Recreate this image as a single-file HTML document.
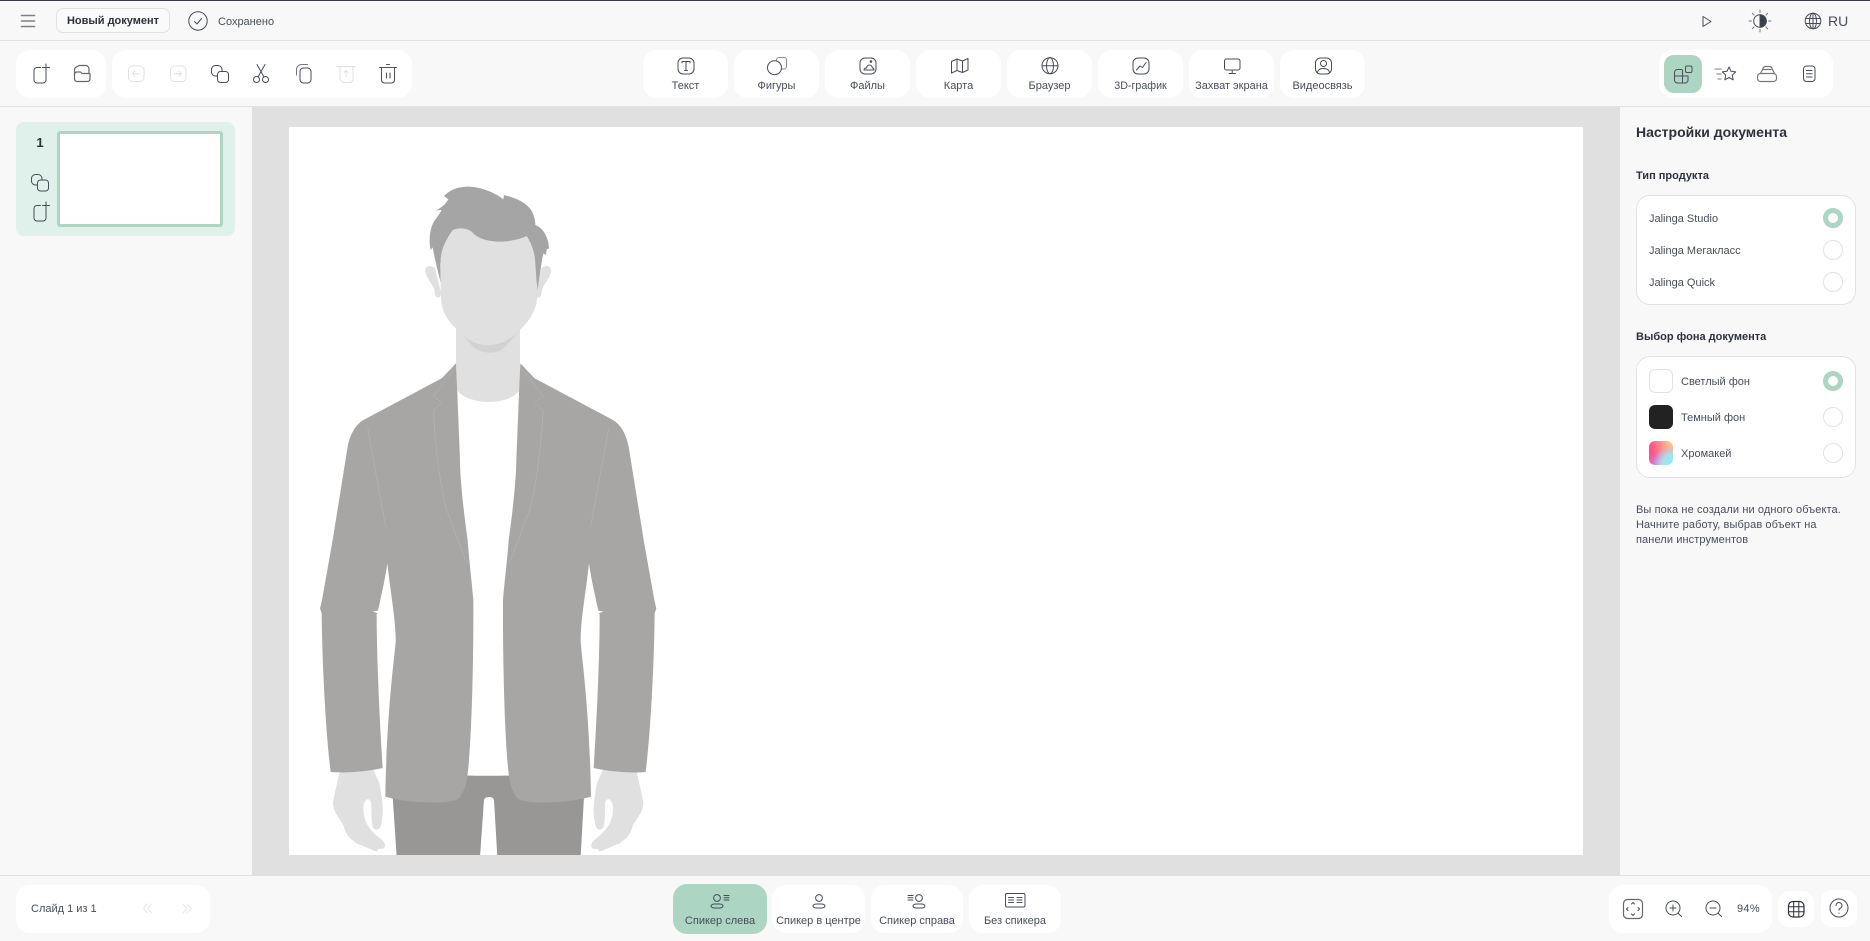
<!DOCTYPE html>
<html lang="ru"><head><meta charset="utf-8"><title>Jalinga</title>
<style>
*{box-sizing:border-box}
html,body{margin:0;padding:0}
body{width:1870px;height:941px;position:relative;overflow:hidden;background:#f8f8f8;font-family:"Liberation Sans",sans-serif;color:#484d5a;font-size:11px}
.a{position:absolute}
.w{position:absolute;background:#fff;border-radius:14px}
.t{position:absolute;white-space:nowrap;line-height:14px;transform:translateY(-50%)}
.c{position:absolute;white-space:nowrap;line-height:14px;text-align:center;transform:translateY(-50%)}
.b{font-weight:bold;color:#2d313c}
.r{position:absolute;width:20px;height:20px;border-radius:50%;border:1px solid #e2e2e2;background:#fff}
.r.on{border:5px solid #acd5c3}
.s{position:absolute;left:1649px;width:24px;height:24px;border-radius:6px}
svg{position:absolute;left:0;top:0}
</style></head><body>
<div class="a" style="left:0;top:0;width:1870px;height:1px;background:#3a3a44"></div>
<div class="a" style="left:0;top:40px;width:1870px;height:1px;background:#e2e2e2"></div>
<div class="a" style="left:0;top:106px;width:1870px;height:1px;background:#e2e2e2"></div>
<div class="a" style="left:252px;top:107px;width:1368px;height:769px;background:#e0e0e0"></div>
<div class="a" style="left:0;top:875px;width:1870px;height:1px;background:#e2e2e2"></div>
<div class="a" style="left:289px;top:127px;width:1294px;height:728px;background:#fff"></div>

<!-- header -->
<div class="a" style="left:56px;top:8px;width:114px;height:25px;border:1px solid #e2e2e2;border-radius:7px;background:#fafafa"></div>
<div class="c b" style="left:56px;width:114px;top:20.5px;font-size:11px">Новый документ</div>
<div class="t" style="left:218px;top:21.5px;font-size:11px">Сохранено</div>
<div class="t" style="left:1828px;top:20.5px;font-size:14px">RU</div>

<!-- toolbar -->
<div class="w" style="left:16px;top:50px;width:90px;height:48px"></div>
<div class="w" style="left:112px;top:50px;width:300px;height:48px"></div>
<div class="w" style="left:643px;top:50px;width:85px;height:48px"></div>
<div class="w" style="left:734px;top:50px;width:85px;height:48px"></div>
<div class="w" style="left:825px;top:50px;width:85px;height:48px"></div>
<div class="w" style="left:916px;top:50px;width:85px;height:48px"></div>
<div class="w" style="left:1007px;top:50px;width:85px;height:48px"></div>
<div class="w" style="left:1098px;top:50px;width:85px;height:48px"></div>
<div class="w" style="left:1189px;top:50px;width:85px;height:48px"></div>
<div class="w" style="left:1280px;top:50px;width:85px;height:48px"></div>
<div class="w" style="left:1659px;top:50px;width:174px;height:48px"></div>
<div class="a" style="left:1664px;top:55px;width:38px;height:38px;border-radius:10px;background:#acd5c3"></div>
<div class="c" style="left:643px;width:85px;top:86px">Текст</div>
<div class="c" style="left:734px;width:85px;top:86px">Фигуры</div>
<div class="c" style="left:825px;width:85px;top:86px">Файлы</div>
<div class="c" style="left:916px;width:85px;top:86px">Карта</div>
<div class="c" style="left:1007px;width:85px;top:86px">Браузер</div>
<div class="c" style="left:1098px;width:85px;top:86px;font-size:10.7px">3D-график</div>
<div class="c" style="left:1189px;width:85px;top:86px">Захват экрана</div>
<div class="c" style="left:1280px;width:85px;top:86px">Видеосвязь</div>

<!-- slides -->
<div class="a" style="left:16px;top:122px;width:219px;height:114px;border-radius:8px;background:#e0f0eb"></div>
<div class="a" style="left:57px;top:131px;width:166px;height:96px;border:3px solid #acd5c3;border-radius:3px;background:#fff"></div>
<div class="c b" style="left:20px;width:40px;top:143px;font-size:13px">1</div>

<!-- right panel -->
<div class="t b" style="left:1636px;top:132px;font-size:14px">Настройки документа</div>
<div class="t b" style="left:1636px;top:175.5px;font-size:11px">Тип продукта</div>
<div class="a" style="left:1636px;top:195px;width:220px;height:110px;border:1px solid #e2e2e2;border-radius:14px;background:#fff"></div>
<div class="t" style="left:1649px;top:218.5px">Jalinga Studio</div>
<div class="t" style="left:1649px;top:250.5px">Jalinga Мегакласс</div>
<div class="t" style="left:1649px;top:282.5px">Jalinga Quick</div>
<div class="r on" style="left:1823px;top:208px"></div>
<div class="r" style="left:1823px;top:240px"></div>
<div class="r" style="left:1823px;top:272px"></div>
<div class="t b" style="left:1636px;top:336.5px;font-size:11px">Выбор фона документа</div>
<div class="a" style="left:1636px;top:356px;width:220px;height:122px;border:1px solid #e2e2e2;border-radius:14px;background:#fff"></div>
<div class="s" style="top:369px;border:1px solid #e2e2e2;background:#fff"></div>
<div class="s" style="top:405px;background:#222"></div>
<div class="s" style="top:441px;background:radial-gradient(circle at 100% 100%,#7fecff 0,#a9e2f0 30%,transparent 60%),radial-gradient(circle at 100% 0,#ffd98e 0,transparent 70%),radial-gradient(circle at 50% 100%,#c68cf0 0,transparent 60%),#ff4f86"></div>
<div class="t" style="left:1681px;top:381.5px">Светлый фон</div>
<div class="t" style="left:1681px;top:417.5px">Темный фон</div>
<div class="t" style="left:1681px;top:453.5px">Хромакей</div>
<div class="r on" style="left:1823px;top:371px"></div>
<div class="r" style="left:1823px;top:407px"></div>
<div class="r" style="left:1823px;top:443px"></div>
<div class="t" style="left:1636px;top:509.5px;letter-spacing:.1px">Вы пока не создали ни одного объекта.</div>
<div class="t" style="left:1636px;top:524.5px;letter-spacing:.1px">Начните работу, выбрав объект на</div>
<div class="t" style="left:1636px;top:539.5px;letter-spacing:.1px">панели инструментов</div>

<!-- bottom -->
<div class="w" style="left:16px;top:885px;width:194px;height:48px"></div>
<div class="t" style="left:31px;top:908.5px">Слайд 1 из 1</div>
<div class="a" style="left:673px;top:884px;width:94px;height:50px;border-radius:14px;background:#acd5c3"></div>
<div class="w" style="left:772px;top:885px;width:93px;height:48px"></div>
<div class="w" style="left:871px;top:885px;width:92px;height:48px"></div>
<div class="w" style="left:969px;top:885px;width:92px;height:48px"></div>
<div class="c" style="left:673px;width:94px;top:921px">Спикер слева</div>
<div class="c" style="left:772px;width:93px;top:921px">Спикер в центре</div>
<div class="c" style="left:871px;width:92px;top:921px">Спикер справа</div>
<div class="c" style="left:969px;width:92px;top:921px">Без спикера</div>
<div class="w" style="left:1609px;top:885px;width:163px;height:48px"></div>
<div class="w" style="left:1778px;top:891px;width:36px;height:36px;border-radius:11px"></div>
<div class="w" style="left:1821px;top:890px;width:36px;height:37px;border-radius:11px"></div>
<div class="t" style="left:1737px;top:908.5px;letter-spacing:.3px">94%</div>

<svg width="1870" height="941" viewBox="0 0 1870 941" fill="none" stroke="#474c58" stroke-width="1" stroke-linecap="round" stroke-linejoin="round">
<!-- header icons -->
<path d="M21.500 15.500h13M21.500 21h13M21.500 26.500h13" stroke="#808080" stroke-width="1.600"/>
<circle cx="198" cy="21" r="9.200"/><path d="M194.500 21.500l2.500 2.500 4.500-5.500"/>
<path d="M1703 16.500v10l8-5z"/>
<circle cx="1760" cy="21" r="6.300"/><path d="M1760 14.700a6.300 6.300 0 0 1 0 12.600z" fill="#3a3f4a"/>
<path d="M1760 10v2.500M1760 29.500V32M1749 21h2.500M1768.500 21h2.500M1752.300 13.300l1.700 1.700M1766 27l1.700 1.700M1767.700 13.300l-1.700 1.700M1754 27l-1.700 1.700" stroke="#777"/>
<circle cx="1813" cy="21" r="7.800"/><ellipse cx="1813" cy="21" rx="3.500" ry="7.800"/><path d="M1805.500 18.500h15M1805.500 23.500h15M1813 13.200v15.600"/>

<!-- toolbar left -->
<g id="ns"><path d="M40.500 67.500h-3.500a3 3 0 0 0-3 3v9.500a3 3 0 0 0 3 3h6a3 3 0 0 0 3-3v-9"/><path d="M46 64v7M42.500 67.500h7"/></g>
<path d="M74.500 78v-8c0-1.500 .5-2.500 2-3l2.500-1.500h6.500c2 0 3.500 1.500 3.500 3.500v4M74.500 74.500c0-1.500 1-2.500 2.500-2.500h3.500l1.500 1.500h7.500c.5 0 .5 0 .5 .5v4.500c0 2-1 3-3 3h-9.500c-2 0-3-1-3-3z" stroke="#666" stroke-width="1.200"/>
<g stroke="#e2e2e2"><rect x="128.500" y="66" width="15.500" height="15.500" rx="4"/><path d="M132.500 73.700h7M135 71l-2.500 2.700 2.500 2.700"/><rect x="170.500" y="66" width="15.500" height="15.500" rx="4"/><path d="M174.500 73.700h7M179 71l2.500 2.700-2.500 2.700"/></g>
<rect x="217.500" y="71.500" width="11" height="11" rx="3"/><path d="M217 76h-1.500a4 4 0 0 1-4-3.500v-3a4 4 0 0 1 4-4h2.500a4 4 0 0 1 4 4v1.500"/>
<circle cx="256.500" cy="79.500" r="3"/><circle cx="265.500" cy="79.500" r="3"/><path d="M258 77l7-12.500M264 77l-7-12.500"/>
<rect x="300" y="68" width="11" height="15" rx="3.500"/><path d="M296.500 75v-5.500a5 5 0 0 1 5-5h6" stroke="#777"/>
<g stroke="#e2e2e2"><path d="M336.500 66.500h19M340 66.500v13l3 3h8l2-2v-14M346 70.500v6M344 72.500l2-2 2 2"/></g>
<path d="M379.500 67.500h17M381.500 68v12a3 3 0 0 0 3 3h7a3 3 0 0 0 3-3V68M386.500 64.500h3M386.500 73v5M390 73v5" stroke="#555" stroke-width="1.100"/>

<!-- toolbar center -->
<rect x="678" y="58" width="16" height="16" rx="5"/><path d="M682 63v-1.500h8v1.500M686 61.500v9M684.500 70.500h3"/>
<rect x="776.500" y="57.500" width="10" height="11.500" rx="2.500" stroke="#8a8a8a"/><circle cx="774.500" cy="67.700" r="7" fill="#fff"/>
<rect x="860" y="58" width="16" height="16" rx="5"/><path d="M864 70c0-2 1.500-2 2.500-2 .3-2 1.500-3 3-3s2.500 1 3 3c1 0 1.500 1 1.500 2z"/><circle cx="871" cy="61.500" r=".8" fill="#3a3f4a"/>
<path d="M951.500 61.500l5.500-2.500 5.500 2 5.500-2.500v11.500l-5.500 2.500-5.500-2-5.500 2.500zM957 59v11.500M962.500 61v11.500"/>
<circle cx="1050" cy="65.700" r="8"/><ellipse cx="1050" cy="65.700" rx="3.500" ry="8"/><path d="M1042 65.700h16"/>
<rect x="1133" y="58" width="16" height="16" rx="5"/><path d="M1136.500 70l3.500-4 2.500 1.500 3.500-5"/>
<rect x="1224.500" y="59" width="15.500" height="11" rx="2"/><path d="M1232.200 70v3.500M1229 73.500h6.500"/>
<rect x="1315.500" y="58" width="16" height="16" rx="5"/><circle cx="1323.500" cy="63.500" r="3"/><path d="M1317.500 72.500c.5-3 3-4 6-4s5.500 1 6 4"/>

<!-- right tools -->
<g stroke="#4a4f58"><path d="M1678 69.500h3.500a1 1 0 0 1 1 1V83h-5a3 3 0 0 1-3-3v-7.500a3 3 0 0 1 3-3zM1682.500 76h5.500v4a3 3 0 0 1-3 3h-2.500M1674.500 76h8"/><rect x="1685.500" y="66" width="6.500" height="6.500" rx="1.500"/></g>
<path d="M1729 67l2 4.300 4.700.6-3.400 3.200.9 4.700-4.200-2.300-4.200 2.300.9-4.700-3.400-3.200 4.700-.6z"/>
<path d="M1715 69h6M1717 74h4M1718 79h3" stroke="#999" stroke-width="1.300"/>
<path d="M1757.500 76.500a3 3 0 0 1 3-3h13a3 3 0 0 1 3 3v2a3 3 0 0 1-3 3h-13a3 3 0 0 1-3-3zM1760.500 73.500l2.500-5c.5-1.500 1.500-2 2.500-2h4c1 0 2 .5 2.500 2l2.500 5M1763 69.500h8" stroke="#777" stroke-width="1.200"/>
<rect x="1803.500" y="66" width="11.500" height="15.500" rx="3"/><path d="M1806.500 70.500h5.500M1806.500 73.700h5.500M1806.500 77h5.500"/>

<!-- slide thumb icons -->
<rect x="37.500" y="180" width="11" height="11" rx="3"/><path d="M37 185h-1.500a4 4 0 0 1-4-3.500v-3a4 4 0 0 1 4-4H38a4 4 0 0 1 4 4v1.500"/>
<use href="#ns" y="138"/>

<!-- bottom icons -->
<g stroke="#e8e8e8"><path d="M147.500 904l-4 4.500 4 4.500M151.500 904l-4 4.500 4 4.500M183 904l4 4.500-4 4.500M187 904l4 4.500-4 4.500"/></g>
<circle cx="717" cy="898" r="3.400"/><path d="M714.500 904h5a3.500 2 0 0 1 0 4h-5a3.500 2 0 0 1 0-4z"/><path d="M724 895.500h5M724 897.700h5M724 900h5"/>
<circle cx="819" cy="898" r="3.400"/><path d="M816.500 904h5a3.500 2 0 0 1 0 4h-5a3.500 2 0 0 1 0-4z"/>
<circle cx="919" cy="898" r="3.400"/><path d="M916.500 904h5a3.500 2 0 0 1 0 4h-5a3.500 2 0 0 1 0-4z"/><path d="M908 895.500h5M908 897.700h5M908 900h5"/>
<rect x="1005.500" y="893.500" width="19.500" height="13.500" rx="1.500"/><path d="M1008.500 897.500h5M1008.500 900h5M1008.500 902.500h5M1017 897.500h5M1017 900h5M1017 902.500h5"/>
<rect x="1623.500" y="899.500" width="19" height="19" rx="4" stroke="#666" stroke-width="1.200"/><path d="M1631.500 904l1.500-1.500 1.500 1.500M1631.500 914l1.500 1.500 1.500-1.500M1628 907.500l-1.500 1.500 1.500 1.500M1638 907.500l1.500 1.500-1.500 1.500"/>
<circle cx="1673" cy="908" r="7"/><path d="M1678 913l3.500 3.500M1673 905v6M1670 908h6"/>
<circle cx="1713" cy="908" r="7"/><path d="M1718 913l3.500 3.500M1710 908h6"/>
<rect x="1788.500" y="901.500" width="15.500" height="15.500" rx="4.500" stroke="#2d313c" stroke-width="1.200"/><path d="M1793.700 901.500v15.500M1798.800 901.500v15.500M1788.500 906.700h15.500M1788.500 911.800h15.500" stroke="#2d313c"/>
<circle cx="1839" cy="908" r="9"/><path d="M1836 905.500a3 3 0 1 1 4.500 2.600c-1 .6-1.500 1-1.500 2.200"/><path d="M1839 913v.4"/>

<!-- person -->
<g transform="translate(300 160) scale(.33333)" stroke="none">
<defs>
<clipPath id="cp"><rect x="-100" y="-100" width="1400" height="2185"/></clipPath>
<g id="arm">
<path fill="#e0e0e0" d="M120 1830L100 1920C95 1950 115 1970 130 1995C140 2030 150 2035 170 2050L230 2075L235 2067L250 2066C260 2060 255 2045 240 2035C215 2015 190 1990 190 1945C190 1920 205 1910 213 1925C216 1950 212 1970 218 2000C225 2015 240 2010 243 1995C250 1960 250 1940 243 1900C243 1880 235 1860 220 1830Z"/>
<path fill="#e0e0e0" d="M375 330C378 315 395 315 405 325L424 400L420 410C410 418 405 410 403 390C398 370 380 360 375 330Z"/>
<path fill="#a7a6a4" d="M468 610L425 655L190 780C165 795 150 825 143 860L98 1140L66 1320L60 1345L65 1360C66 1480 75 1700 92 1836C140 1840 200 1835 248 1824C240 1700 230 1500 230 1362L234 1360L218 1355L234 1352C245 1300 255 1260 262 1210C272 1300 287 1380 287 1440C287 1470 260 1640 256 1910C300 1925 420 1935 470 1920C490 1905 497 1880 502 1850C515 1750 521 1500 520 1320C515 1260 505 1180 503 1140C490 1050 480 950 480 900L472 700Z"/>
<path d="M468 622L400 708L425 728L400 752C405 850 420 980 440 1050L500 1210M203 805L257 1100" stroke="#b8b8b6" stroke-width="1.500" fill="none"/>
</g>
</defs>
<g clip-path="url(#cp)">
<path fill="#989795" d="M278 1800H852V1910L842 2090H592L582 1920C580 1908 554 1908 552 1920L540 2090H290L278 1910Z"/>
<path fill="#fff" d="M440 1500H690V1845C650 1848 480 1848 440 1845Z"/>
<path fill="#e0e0e0" d="M468 480H660V690C625 740 500 735 472 690L468 610Z"/>
<path fill="#d2d2d2" d="M468 505C500 535 515 560 530 568C560 582 590 580 605 568C625 555 640 530 660 510Z"/>
<use href="#arm"/>
<use href="#arm" transform="translate(1129 0) scale(-1 1)"/>
<path fill="#a5a5a5" d="M407 152C420 145 435 135 445 118L432 108C450 90 470 82 500 80C540 80 580 95 610 118L612 105C640 112 670 122 690 145C702 162 706 180 706 195C725 202 745 225 747 265L740 268L738 285L730 280L726 300C722 330 716 360 713 390C708 350 703 320 700 300L560 300L421 310L422 368C415 340 405 300 398 262L392 270C385 240 390 200 405 180C412 170 420 160 425 150C420 150 412 151 407 152Z"/>
<path fill="#e0e0e0" d="M422 300C422 270 440 235 457 212C470 202 505 202 520 220C540 240 580 248 620 244C645 240 665 236 680 228C695 250 705 280 706 310L712 400C712 440 700 470 660 510C640 530 610 555 565 555C520 555 490 530 468 505C430 470 424 440 422 400Z"/>
</g>
</g>
</svg>
</body></html>
